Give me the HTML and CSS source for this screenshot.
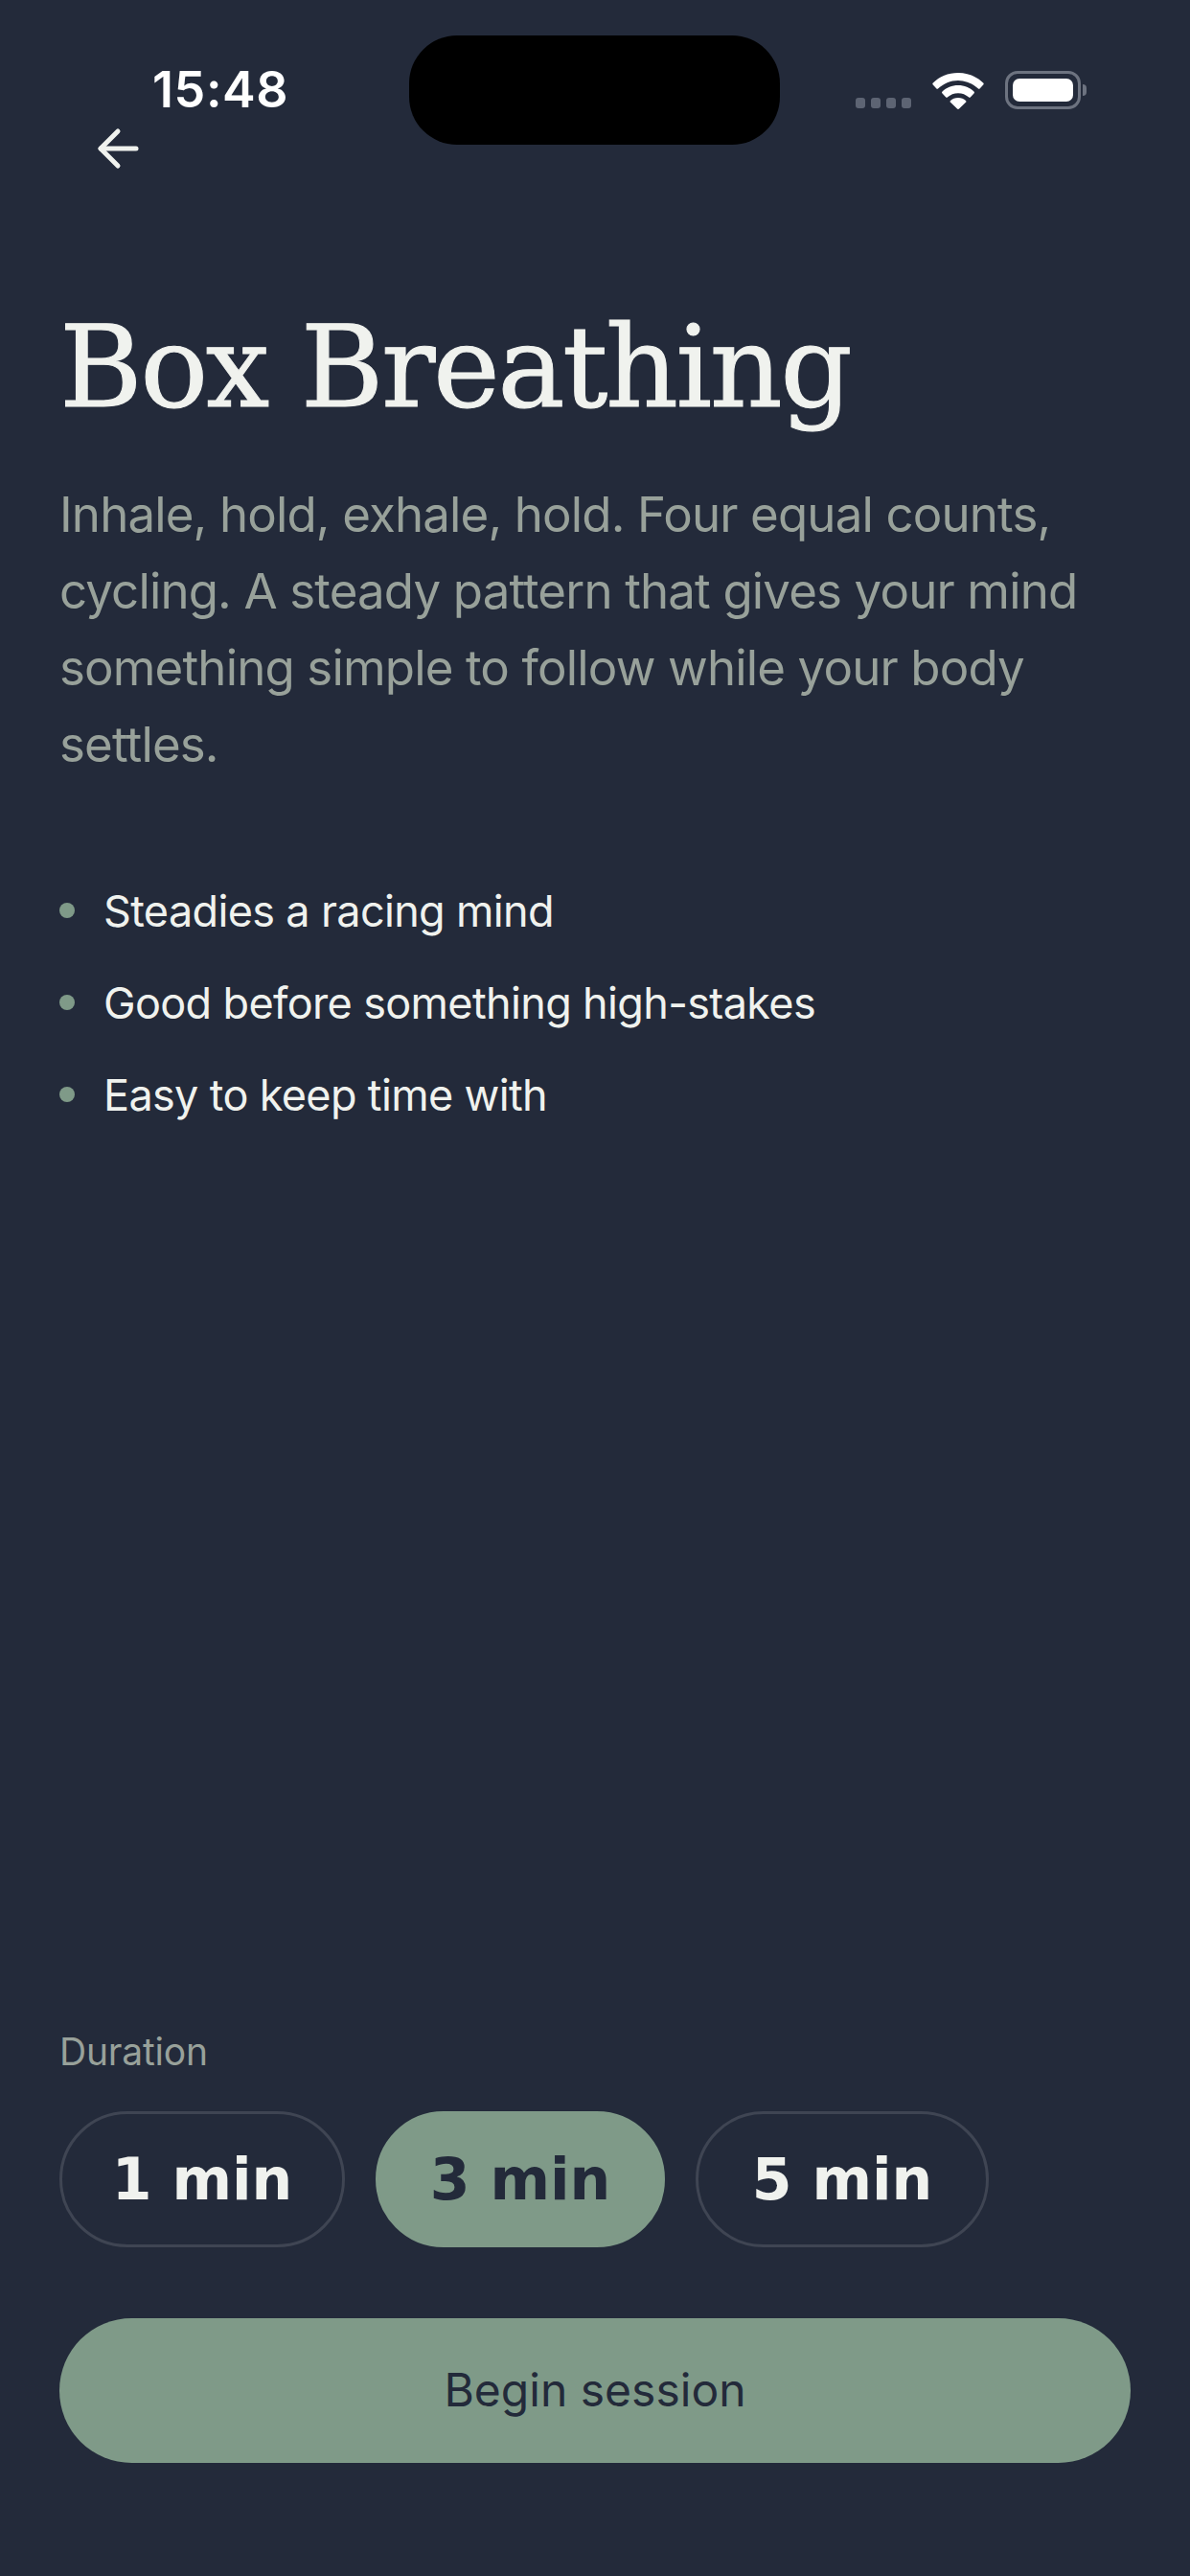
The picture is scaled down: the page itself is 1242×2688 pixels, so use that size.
FILE: index.html
```html
<!DOCTYPE html>
<html lang="en">
<head>
  <meta charset="UTF-8" />
  <meta name="viewport" content="width=device-width, initial-scale=1.0" />
  <title>Box Breathing</title>
  <link rel="stylesheet" href="styles.css">
</head>
<body>
  <div class="screen">
    <div class="island"></div>

    <div class="statusbar">
      <span class="time">15:48</span>
      <div class="status-icons">
        <div class="signal"><i></i><i></i><i></i><i></i></div>
        <svg class="wifi" width="54" height="38" viewBox="0 0 54 38">
          <path d="M27 0C16.500 0 7.500 4 0.800 10.500a1.500 1.500 0 0 0 0 2.100l3.400 3.700a1.500 1.500 0 0 0 2.100 0C11.700 11.300 19 8 27 8s15.300 3.300 20.700 8.300a1.500 1.500 0 0 0 2.100 0l3.400-3.700a1.500 1.500 0 0 0 0-2.100C46.500 4 37.500 0 27 0z" fill="#fff"/>
          <path d="M27 13c-6.500 0-12.300 2.500-16.500 6.500a1.500 1.500 0 0 0 0 2.100l3.500 3.700a1.500 1.500 0 0 0 2.100 0c2.800-2.500 6.700-4.100 10.900-4.100s8.100 1.600 10.900 4.100a1.500 1.500 0 0 0 2.100 0l3.500-3.700a1.500 1.500 0 0 0 0-2.100C39.300 15.500 33.500 13 27 13z" fill="#fff"/>
          <path d="M27 26c-3.200 0-6 1.100-8 3a1.300 1.300 0 0 0 0 1.800l7 6.700a1.400 1.400 0 0 0 2 0l7-6.700a1.300 1.300 0 0 0 0-1.800c-2-1.900-4.800-3-8-3z" fill="#fff"/>
        </svg>
        <div class="battery">
          <div class="battery-body"><div class="battery-fill"></div></div>
          <div class="battery-cap"></div>
        </div>
      </div>
    </div>

    <a class="back" href="#">
      <svg width="44" height="44" viewBox="0 0 44 44" fill="none" stroke="#f0f2ee" stroke-width="5" stroke-linecap="round" stroke-linejoin="round">
        <path d="M41 22H4"/>
        <path d="M22 4L4 22l18 18"/>
      </svg>
    </a>

    <h1>Box Breathing</h1>
    <p class="intro">Inhale, hold, exhale, hold. Four equal counts, cycling. A steady pattern that gives your mind something simple to follow while your body settles.</p>

    <ul class="benefits">
      <li>Steadies a racing mind</li>
      <li>Good before something high-stakes</li>
      <li>Easy to keep time with</li>
    </ul>

    <div class="bottom">
      <div class="label">Duration</div>
      <div class="chips">
        <button class="chip">1 min</button>
        <button class="chip selected">3 min</button>
        <button class="chip">5 min</button>
      </div>
      <button class="begin">Begin session</button>
    </div>
  </div>
</body>
</html>
```

FILE: styles.css
```css
* {
  box-sizing: border-box;
}
body {
  margin: 0;
  background-color: #232a3a;
  font-family: 'Inter', sans-serif;
}
.screen {
  position: relative;
  width: 1242px;
  height: 2688px;
  padding: 0 62px 118px;
  display: flex;
  flex-direction: column;
  background-color: #232a3a;
  color: #f0f2ee;
}
.island {
  position: absolute;
  left: 427px;
  top: 37px;
  width: 387px;
  height: 114px;
  border-radius: 50px;
  background: #000;
}
.statusbar {
  display: flex;
  justify-content: space-between;
  align-items: flex-start;
  height: 133px;
  padding: 64px 0 0 97px;
}
.time {
  font-size: 52px;
  line-height: 60px;
  font-weight: 600;
  letter-spacing: 0.6px;
  color: #fff;
}
.status-icons {
  display: flex;
  align-items: flex-end;
  gap: 22px;
  margin-top: 10px;
  margin-right: 46px;
}
.signal {
  display: flex;
  gap: 6px;
  padding-bottom: 1px;
}
.signal i {
  width: 10px;
  height: 11px;
  border-radius: 3px;
  background: #5d6473;
}
.battery {
  display: flex;
  align-items: center;
  gap: 2px;
}
.battery-body {
  width: 79px;
  height: 40px;
  padding: 5px;
  border: 3px solid #6d7380;
  border-radius: 13px;
}
.battery-fill {
  height: 100%;
  background: #fff;
  border-radius: 7px;
}
.battery-cap {
  width: 4px;
  height: 12px;
  background: #6d7380;
  border-radius: 0 4px 4px 0;
}
.back {
  display: block;
  width: 44px;
  height: 44px;
  margin-left: 39px;
}
h1 {
  margin: 131px 0 0;
  font-family: 'DejaVu Serif', serif;
  font-size: 118px;
  line-height: 150px;
  font-weight: 400;
  letter-spacing: -2.5px;
  -webkit-text-stroke: 1px #f0f2ee;
  color: #f0f2ee;
}
.intro {
  margin: 39px 0 0;
  font-size: 51px;
  line-height: 80px;
  letter-spacing: -0.85px;
  color: #98a19a;
}
.benefits {
  list-style: none;
  margin: 85px 0 0;
  padding: 0;
}
.benefits li {
  display: flex;
  align-items: center;
  height: 96px;
  font-size: 45px;
  letter-spacing: -0.65px;
  color: #f0f2ee;
}
.benefits li::before {
  content: "";
  width: 16px;
  height: 16px;
  margin-right: 30px;
  border-radius: 50%;
  background: #7f9a88;
}
.bottom {
  margin-top: auto;
}
.label {
  font-size: 39px;
  line-height: 46px;
  letter-spacing: -0.2px;
  color: #98a19a;
}
.chips {
  display: grid;
  grid-template-columns: 298px 302px 306px;
  gap: 32px;
  margin-top: 39px;
}
.chip {
  height: 142px;
  padding: 0;
  border: 3px solid #3f4553;
  border-radius: 71px;
  background: none;
  font-family: 'DejaVu Sans', sans-serif;
  font-size: 60px;
  font-weight: 700;
  color: #f0f2ee;
}
.chip.selected {
  border-color: #7f9a88;
  background: #7f9a88;
  color: #232a3a;
}
.begin {
  display: block;
  width: 100%;
  height: 151px;
  margin-top: 74px;
  padding-bottom: 4px;
  border: none;
  border-radius: 76px;
  background: #7f9a88;
  font-family: inherit;
  font-size: 48px;
  color: #232a3a;
}
```
